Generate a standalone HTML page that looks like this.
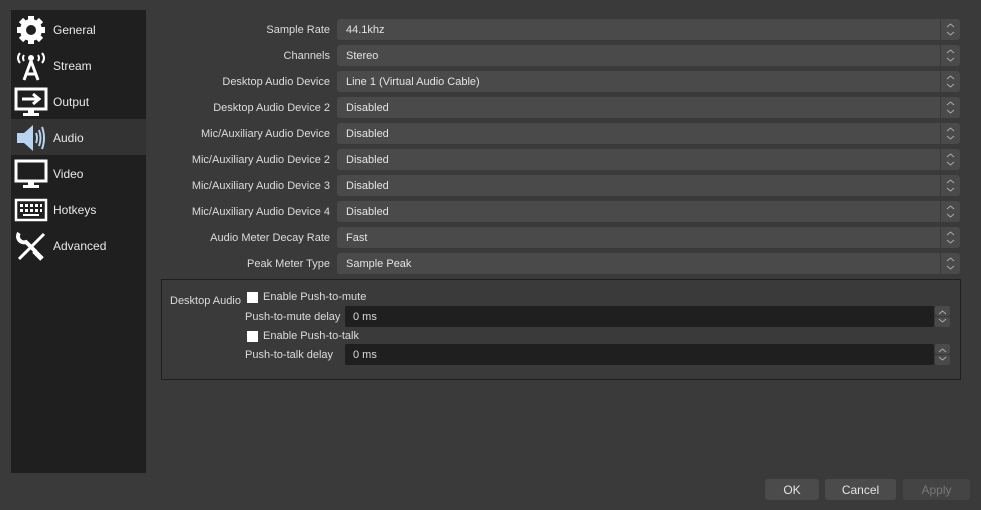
<!DOCTYPE html><html><head><style>
body{margin:0;width:981px;height:510px;background:#3a3a3a;font-family:"Liberation Sans",sans-serif;font-size:11px;color:#dcdcdc;position:relative;overflow:hidden}
.abs{position:absolute}
.side{left:11px;top:10px;width:135px;height:463px;background:#1f1f1f}
.item{position:absolute;left:0;width:135px;height:36px;line-height:38px;padding-left:42px;box-sizing:border-box;color:#e8e8e8;font-size:12px}
.item svg{position:absolute;left:3px;top:2px}
.lbl{position:absolute;right:651px;text-align:right;white-space:nowrap}
.combo{position:absolute;left:337px;width:623px;height:21px;background:#4a4a4a;border-radius:3px;line-height:23px;padding-left:9px;box-sizing:border-box;color:#e4e4e4}
.combo:after{content:"";position:absolute;right:19px;top:0;width:1px;height:21px;background:#3a3a3a}
.combo svg,.sb svg{position:absolute;right:5px;top:4px}
.spin{position:absolute;left:345px;width:589px;height:21px;background:#1f1f1f;border-radius:2px;line-height:23px;padding-left:8px;box-sizing:border-box}
.sb{position:absolute;left:935px;width:15px;height:21px;}
.sb i{position:absolute;left:0;width:15px;height:10px;background:#4a4a4a;border-radius:2px}
.btn{position:absolute;top:479px;height:21px;background:#4b4b4b;border-radius:3px;text-align:center;line-height:22px;color:#e4e4e4;font-size:12px}
.cb{position:absolute;left:247px;width:11px;height:11px;background:#fff}
</style></head><body>
<svg width="0" height="0" style="position:absolute"><defs><symbol id="ud" viewBox="0 0 9 13"><path d="M1 4L4.5 1L8 4M1 9L4.5 12L8 9" fill="none" stroke="#aaa" stroke-width="1"/></symbol></defs></svg>
<div class="abs side">
<div class="item" style="top:1px"><svg width="34" height="34" viewBox="0 0 34 34"><g fill="#fff"><circle cx="17" cy="17" r="11"/><g stroke="#fff" stroke-width="6"><line x1="17" y1="3" x2="17" y2="31"/><line x1="3" y1="17" x2="31" y2="17"/><line x1="7" y1="7" x2="27" y2="27"/><line x1="27" y1="7" x2="7" y2="27"/></g></g><circle cx="17" cy="17" r="5" fill="#1f1f1f"/></svg>General</div>
<div class="item" style="top:37px"><svg width="34" height="34" viewBox="0 0 34 34"><g fill="none" stroke="#fff" stroke-width="2"><path d="M6 4Q2 9 6 14M10 6Q8 9 10 12M28 4Q32 9 28 14M24 6Q26 9 24 12"/><path d="M17 12L10 31M17 12L24 31M12 25H22" stroke-width="3"/></g><circle cx="17" cy="9" r="3" fill="#fff"/></svg>Stream</div>
<div class="item" style="top:73px"><svg width="34" height="34" viewBox="0 0 34 34"><rect x="2" y="4" width="30" height="20" fill="none" stroke="#fff" stroke-width="3"/><path d="M8 14H24M19 9L25 14L19 19" stroke="#fff" stroke-width="3" fill="none"/><rect x="14" y="24" width="6" height="4" fill="#fff"/><rect x="9" y="28" width="16" height="3" fill="#fff"/></svg>Output</div>
<div class="item" style="top:109px;background:#333"><svg width="34" height="34" viewBox="0 0 34 34"><path d="M3 12H10L19 4V30L10 22H3Z" fill="#b8d4f0"/><g fill="none" stroke="#b8d4f0" stroke-width="2"><path d="M22 12Q24 17 22 22M25 9Q28 17 25 25M28 6Q32 17 28 28"/></g></svg>Audio</div>
<div class="item" style="top:145px"><svg width="34" height="34" viewBox="0 0 34 34"><rect x="2" y="4" width="30" height="20" fill="none" stroke="#fff" stroke-width="3"/><rect x="14" y="24" width="6" height="4" fill="#fff"/><rect x="9" y="28" width="16" height="3" fill="#fff"/></svg>Video</div>
<div class="item" style="top:181px"><svg width="34" height="34" viewBox="0 0 34 34"><rect x="2" y="7" width="30" height="20" fill="none" stroke="#fff" stroke-width="2.5"/><g fill="#fff"><rect x="6" y="11" width="3" height="3"/><rect x="11" y="11" width="3" height="3"/><rect x="16" y="11" width="3" height="3"/><rect x="21" y="11" width="3" height="3"/><rect x="26" y="11" width="2" height="3"/><rect x="6" y="16" width="3" height="3"/><rect x="11" y="16" width="3" height="3"/><rect x="16" y="16" width="3" height="3"/><rect x="21" y="16" width="3" height="3"/><rect x="26" y="16" width="2" height="3"/><rect x="9" y="21" width="16" height="2"/></g></svg>Hotkeys</div>
<div class="item" style="top:217px"><svg width="34" height="34" viewBox="0 0 34 34"><path d="M5 30L30 5" stroke="#fff" stroke-width="3"/><path d="M20 22L28 30" stroke="#fff" stroke-width="5"/><path d="M5 4A6 6 0 0 0 12 13L22 23" stroke="#fff" stroke-width="4" fill="none"/></svg>Advanced</div>
</div>
<div class="lbl" style="top:24px">Sample Rate</div><div class="combo" style="top:19px">44.1khz<svg width="9" height="13"><use href="#ud"/></svg></div>
<div class="lbl" style="top:50px">Channels</div><div class="combo" style="top:45px">Stereo<svg width="9" height="13"><use href="#ud"/></svg></div>
<div class="lbl" style="top:76px">Desktop Audio Device</div><div class="combo" style="top:71px">Line 1 (Virtual Audio Cable)<svg width="9" height="13"><use href="#ud"/></svg></div>
<div class="lbl" style="top:102px">Desktop Audio Device 2</div><div class="combo" style="top:97px">Disabled<svg width="9" height="13"><use href="#ud"/></svg></div>
<div class="lbl" style="top:128px">Mic/Auxiliary Audio Device</div><div class="combo" style="top:123px">Disabled<svg width="9" height="13"><use href="#ud"/></svg></div>
<div class="lbl" style="top:154px">Mic/Auxiliary Audio Device 2</div><div class="combo" style="top:149px">Disabled<svg width="9" height="13"><use href="#ud"/></svg></div>
<div class="lbl" style="top:180px">Mic/Auxiliary Audio Device 3</div><div class="combo" style="top:175px">Disabled<svg width="9" height="13"><use href="#ud"/></svg></div>
<div class="lbl" style="top:206px">Mic/Auxiliary Audio Device 4</div><div class="combo" style="top:201px">Disabled<svg width="9" height="13"><use href="#ud"/></svg></div>
<div class="lbl" style="top:232px">Audio Meter Decay Rate</div><div class="combo" style="top:227px">Fast<svg width="9" height="13"><use href="#ud"/></svg></div>
<div class="lbl" style="top:258px">Peak Meter Type</div><div class="combo" style="top:253px">Sample Peak<svg width="9" height="13"><use href="#ud"/></svg></div>
<div class="abs" style="left:161px;top:279px;width:798px;height:99px;border:1px solid #1f1f1f"></div>
<div class="abs" style="left:170px;top:295px">Desktop Audio</div>
<div class="cb" style="top:292px"></div><div class="abs" style="left:263px;top:291px">Enable Push-to-mute</div>
<div class="abs" style="left:245px;top:311px">Push-to-mute delay</div>
<div class="spin" style="top:306px">0 ms</div><div class="sb" style="top:306px"><i style="top:0"></i><i style="top:11px"></i><svg width="9" height="13" style="right:3px;top:4px"><use href="#ud"/></svg></div>
<div class="cb" style="top:331px"></div><div class="abs" style="left:263px;top:330px">Enable Push-to-talk</div>
<div class="abs" style="left:245px;top:349px">Push-to-talk delay</div>
<div class="spin" style="top:344px">0 ms</div><div class="sb" style="top:344px"><i style="top:0"></i><i style="top:11px"></i><svg width="9" height="13" style="right:3px;top:4px"><use href="#ud"/></svg></div>
<div class="btn" style="left:765px;width:54px">OK</div>
<div class="btn" style="left:825px;width:71px">Cancel</div>
<div class="btn" style="left:903px;width:67px;color:#777;background:#444">Apply</div>
</body></html>
